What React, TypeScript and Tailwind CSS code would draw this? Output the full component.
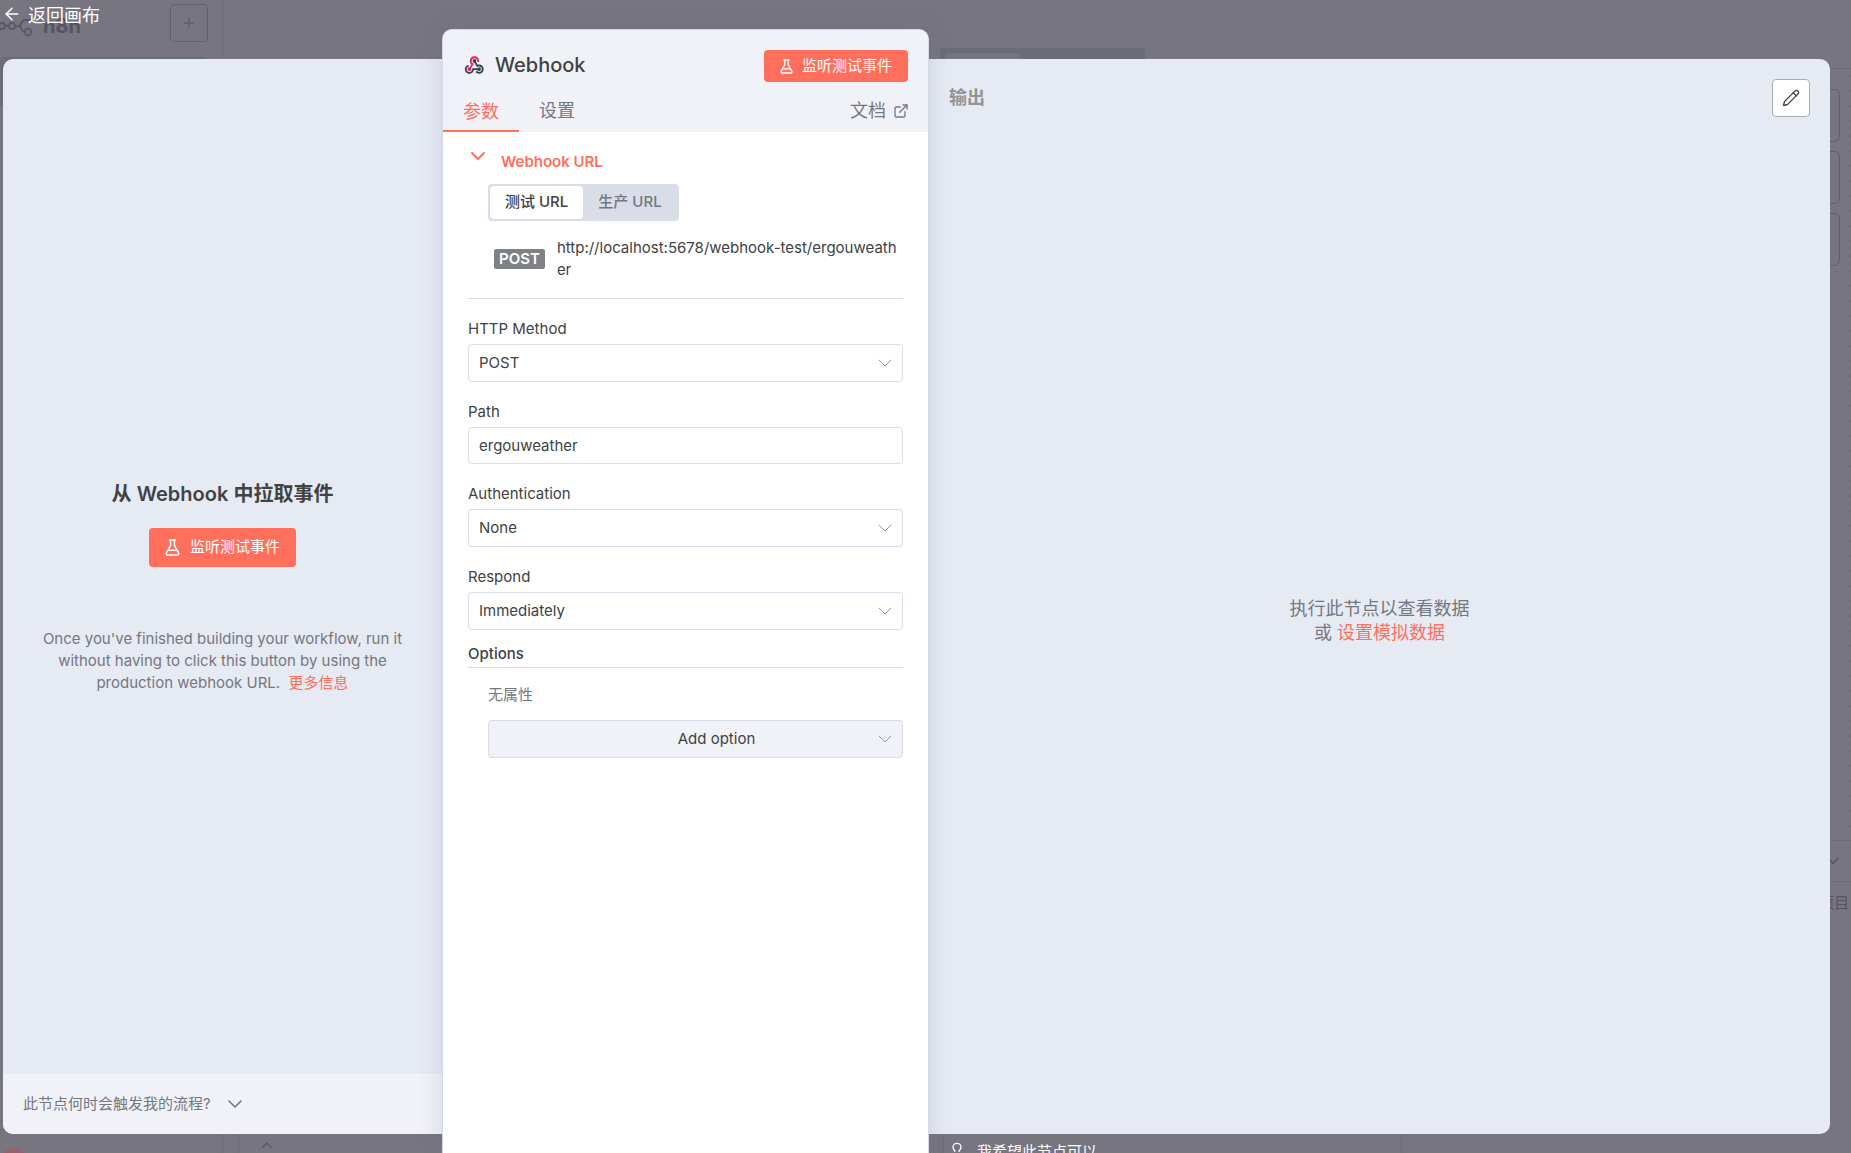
import { useState } from 'react';
import { ArrowLeft, ChevronDown, ChevronUp, ExternalLink, Lightbulb, Pencil, Plus } from 'lucide-react';

function WebhookIcon() {
  return (
    <svg viewBox="0 0 48 48" className="mt-1 size-[22px] shrink-0" aria-hidden="true">
      <path fill="#37474f" d="M35 37c-2.2 0-4-1.8-4-4s1.8-4 4-4 4 1.8 4 4-1.8 4-4 4" />
      <path fill="#37474f" d="M35 43c-3 0-5.9-1.4-7.8-3.7l3.1-2.5c1.1 1.4 2.9 2.3 4.7 2.3 3.3 0 6-2.7 6-6s-2.7-6-6-6c-1 0-2 .3-2.9.7l-1.7 1L23.3 16l3.5-1.9 5.3 9.4c1-.3 2-.5 3-.5 5.5 0 10 4.5 10 10S40.5 43 35 43" />
      <path fill="#37474f" d="M14 43C8.5 43 4 38.5 4 33c0-4.6 3.1-8.5 7.5-9.7l1 3.9C9.9 27.9 8 30.3 8 33c0 3.3 2.7 6 6 6s6-2.7 6-6v-2h15v4H23.8c-.9 4.6-5 8-9.8 8" />
      <path fill="#e91e63" d="M14 37c-2.2 0-4-1.8-4-4s1.8-4 4-4 4 1.8 4 4-1.8 4-4 4" />
      <path fill="#37474f" d="M25 19c-2.2 0-4-1.8-4-4s1.8-4 4-4 4 1.8 4 4-1.8 4-4 4" />
      <path fill="#e91e63" d="m15.7 34-3.4-2 5.9-9.7c-2-1.9-3.2-4.5-3.2-7.3 0-5.5 4.5-10 10-10s10 4.5 10 10c0 .9-.1 1.7-.3 2.5l-3.9-1c.1-.5.2-1 .2-1.5 0-3.3-2.7-6-6-6s-6 2.7-6 6c0 2.1 1.1 4 2.9 5.1l1.7 1z" />
    </svg>
  );
}

function FlaskIcon({ className }: { className: string }) {
  return (
    <svg viewBox="0 0 14 16" fill="none" stroke="currentColor" strokeWidth="1.4" strokeLinecap="round" strokeLinejoin="round" className={className} aria-hidden="true">
      <path d="M4.2 1h5.6M5.2 1v5L1.2 13.2c-.4.9.1 1.8 1 1.8h9.6c.9 0 1.4-.9 1-1.8L8.8 6V1" />
      <path d="M3.2 10.5h7.6" />
    </svg>
  );
}

function LogoIcon() {
  return (
    <svg viewBox="0 0 34 22" fill="none" stroke="#5a5964" strokeWidth="2" className="h-[22px] w-[34px]" aria-hidden="true">
      <circle cx="2" cy="11" r="3" />
      <circle cx="12" cy="11" r="3.2" />
      <path d="M5 11h4M15 11h3c5 0 2-6 7-6h7M18 11c5 0 2 6 7 6" />
      <circle cx="28" cy="17" r="3.2" />
    </svg>
  );
}

type SelectFieldProps = { id: string; label: string; options: string[] };

function SelectField({ id, label, options }: SelectFieldProps) {
  return (
    <div className="mb-5">
      <label htmlFor={id} className="block h-[25px] text-[15px] leading-5">{label}</label>
      <div className="relative">
        <select id={id} className="h-[38px] w-full appearance-none rounded border border-[#d9dce9] bg-white px-[10px] text-[15px]">
          {options.map((option) => (
            <option key={option}>{option}</option>
          ))}
        </select>
        <SelectArrow />
      </div>
    </div>
  );
}

function SelectArrow() {
  return (
    <svg viewBox="0 0 14 8" fill="none" stroke="#94959d" className="pointer-events-none absolute top-[15px] right-[11px] h-2 w-[14px]" aria-hidden="true">
      <path d="M.8.8 7 7 13.2.8" />
    </svg>
  );
}

// Dimmed editor that stays visible around the node dialog
function EditorBackdrop() {
  return (
    <div className="flex h-full text-[#55545f]" aria-hidden="true">
      <aside className="flex w-[223px] shrink-0 flex-col border-r border-[#6b6b7c]">
        <div className="flex h-[57px] items-start pt-1 pr-[14px]">
          <div className="mt-2 flex items-center gap-[9px]">
            <LogoIcon />
            <span className="text-xl leading-7 font-bold">n8n</span>
          </div>
          <span className="ml-auto flex size-[38px] items-center justify-center rounded border border-[#62616f]">
            <Plus className="size-4" strokeWidth={1.5} />
          </span>
        </div>
        <div className="mr-[15px] h-[50px] rounded bg-[#6a6c78]" />
        <div className="mt-auto h-6 border-t border-[#6b6b7c] pt-[18px]">
          <div className="size-[27px] rounded-full bg-[#95626a]" />
        </div>
      </aside>
      <div className="relative flex min-w-0 flex-1 flex-col">
        <div className="h-[69px] shrink-0 border-b border-[#6b6b7c]" />
        <div className="absolute top-12 left-[717px] h-10 w-[205px] rounded bg-[#6a6c78] p-[5px]">
          <div className="h-full w-[75px] rounded bg-[#777580]" />
        </div>
        <div className="flex flex-1 flex-col items-end gap-[9px] bg-[radial-gradient(circle,#706e7b_1px,transparent_1px)] bg-[size:15px_15px] pt-5 pr-[11px]">
          <div className="h-[53px] w-[60px] rounded-md border border-[#605f6d] bg-[#777580]" />
          <div className="h-[53px] w-[60px] rounded-md border border-[#605f6d] bg-[#777580]" />
          <div className="h-[53px] w-[60px] rounded-md border border-[#605f6d] bg-[#777580]" />
        </div>
        <div className="flex h-[313px] flex-col border-t border-[#6b6b7c]">
          <div className="flex h-10 items-center justify-end pr-2">
            <ChevronDown className="size-5" />
          </div>
          <div className="flex flex-1 border-t border-[#6b6b7c] pl-[15px]">
            <div className="flex w-[705px] items-end border-l border-[#6b6b7c] pl-5">
              <ChevronUp className="size-4" />
            </div>
            <div className="w-[458px] border-l border-[#6b6b7c]" />
            <div className="flex-1 border-l border-[#6b6b7c] pt-[10px] pr-[2px] text-right text-[15px] leading-[22px]">
              项目
            </div>
          </div>
        </div>
      </div>
    </div>
  );
}

function InputPanel() {
  return (
    <section className="mt-[59px] mb-[19px] flex w-[439px] shrink-0 flex-col overflow-hidden rounded-l-[10px] bg-[#e6eaf3]">
      <div className="flex flex-1 flex-col items-center justify-center px-8 pt-10 text-center">
        <h2 className="text-xl leading-7 font-semibold">从 Webhook 中拉取事件</h2>
        <button className="mt-5 flex h-[39px] items-center gap-[10px] rounded bg-[#ff6f5c] px-4 text-[15px] text-white">
          <FlaskIcon className="h-[17px] w-[15px]" />
          监听测试事件
        </button>
        <p className="mt-[61px] text-[15px] leading-[22px] text-[#75777f]">
          Once you've finished building your workflow, run it without having to click this button by using the
          production webhook URL. &nbsp;
          <a href="#more" className="text-[#ff6f5c]">更多信息</a>
        </p>
      </div>
      <button className="flex h-[60px] items-center gap-3 bg-[#f1f2f7] px-5 text-[15px] text-[#75777f]">
        此节点何时会触发我的流程?
        <ChevronDown className="size-6" strokeWidth={1.6} />
      </button>
    </section>
  );
}

function NodeSettings() {
  const [urlType, setUrlType] = useState('test');
  const active = 'rounded bg-white text-[#404244]';
  const inactive = 'text-[#75777f]';
  const url = urlType === 'test' ? 'http://localhost:5678/webhook-test/ergouweather' : 'http://localhost:5678/webhook/ergouweather';

  return (
    <section className="z-10 mt-[29px] flex w-[487px] shrink-0 flex-col overflow-hidden rounded-t-[10px] border border-b-0 border-[#d5d9e6] bg-white shadow-[0_0_24px_rgba(80,90,130,0.18)]">
      <header className="bg-[#f1f2f7]">
        <div className="flex items-start gap-[10px] px-5 pt-5">
          <WebhookIcon />
          <h1 className="text-xl leading-[30px] font-medium">Webhook</h1>
          <button className="ml-auto flex h-8 items-center gap-[9px] rounded bg-[#ff6f5c] px-4 text-[15px] text-white">
            <FlaskIcon className="h-[15px] w-[13px]" />
            监听测试事件
          </button>
        </div>
        <nav className="flex pt-2 text-lg leading-6 text-[#75777f]">
          <button className="h-[42px] border-b-2 border-[#ff6f5c] px-5 pt-1 text-[#ff6f5c]">参数</button>
          <button className="h-[42px] border-b-2 border-transparent px-5 pt-[2px]">设置</button>
          <a href="#docs" className="ml-auto flex h-10 items-center gap-[7px] pt-[2px] pr-[19px]">
            文档
            <ExternalLink className="size-4" strokeWidth={2} />
          </a>
        </nav>
      </header>

      <div className="px-[25px] pt-[18px]">
        <button className="-ml-[2px] flex items-start gap-[11px] text-[15px] leading-6 font-semibold text-[#ff6f5c]">
          <ChevronDown className="-mt-[6px] size-6" strokeWidth={2} />
          Webhook URL
        </button>
        <div className="mt-[10px] ml-5 flex h-[37px] w-fit rounded bg-[#d9dde8] p-[2px] text-[15px] font-medium">
          <button className={`px-[15px] ${urlType === 'test' ? active : inactive}`} onClick={() => setUrlType('test')}>
            测试 URL
          </button>
          <button className={`px-[15px] ${urlType === 'prod' ? active : inactive}`} onClick={() => setUrlType('prod')}>
            生产 URL
          </button>
        </div>
        <div className="mt-4 ml-[26px] flex items-center gap-3">
          <span className="rounded-xs bg-[#7e8186] px-[5px] text-[15px] leading-5 font-semibold text-white">POST</span>
          <span className="flex-1 text-[15px] leading-[22px] break-all">{url}</span>
        </div>
        <hr className="mt-[17px] mb-5 border-[#d9dce9]" />

        <SelectField id="method" label="HTTP Method" options={['POST', 'GET', 'PUT', 'DELETE']} />
        <div className="mb-5">
          <label htmlFor="path" className="block h-[25px] text-[15px] leading-5">Path</label>
          <input id="path" defaultValue="ergouweather" className="h-[37px] w-full rounded border border-[#d9dce9] px-[10px] text-[15px]" />
        </div>
        <SelectField id="auth" label="Authentication" options={['None', 'Basic Auth', 'Header Auth']} />
        <SelectField id="respond" label="Respond" options={['Immediately', 'When Last Node Finishes']} />

        <h3 className="-mt-[6px] border-b border-[#d9dce9] pb-[3px] text-[15px] leading-5 font-medium">Options</h3>
        <div className="pl-5">
          <p className="mt-4 text-[15px] leading-[22px] text-[#75777f]">无属性</p>
          <div className="relative mt-[14px]">
            <select aria-label="Add option" className="h-[38px] w-full appearance-none rounded border border-[#d9dce9] bg-[#f1f2f7] pl-[42px] text-center text-[15px]">
              <option>Add option</option>
            </select>
            <SelectArrow />
          </div>
        </div>
      </div>
    </section>
  );
}

function OutputPanel() {
  return (
    <div className="mt-[59px] flex min-w-0 flex-1 flex-col">
      <section className="flex flex-1 flex-col rounded-r-[10px] bg-[#e6eaf3]">
        <div className="flex items-center justify-between px-5 pt-5">
          <h2 className="text-lg font-bold text-[#929498]">输出</h2>
          <button aria-label="编辑输出" className="flex size-[38px] items-center justify-center rounded border border-[#a9adb9] bg-white">
            <Pencil className="size-[18px]" strokeWidth={1.8} />
          </button>
        </div>
        <div className="flex flex-1 flex-col items-center justify-center pb-[10px] text-lg leading-6 text-[#75777f]">
          <p>执行此节点以查看数据</p>
          <p>
            或 <a href="#mock" className="text-[#ff6f5c]">设置模拟数据</a>
          </p>
        </div>
      </section>
      <div className="flex h-[19px] items-start gap-3 overflow-hidden pt-1 pl-5 text-[15px] text-white">
        <Lightbulb className="mt-1 size-4 shrink-0" />
        <span className="mt-[3px] leading-[22px]">我希望此节点可以</span>
      </div>
    </div>
  );
}

export default function App() {
  return (
    <main className="relative h-screen overflow-hidden bg-[#777580] font-['Inter','Noto_Sans_CJK_SC',sans-serif] text-[#404244]">
      <EditorBackdrop />

      {/* Node dialog over the editor */}
      <div className="absolute inset-0 flex pr-[21px] pl-[3px]">
        <InputPanel />
        <NodeSettings />
        <OutputPanel />
      </div>
      <a href="#canvas" className="absolute top-1 left-[2px] flex items-center gap-[6px] text-lg leading-6 text-white">
        <ArrowLeft className="-mt-1 size-5" strokeWidth={1.8} />
        返回画布
      </a>
    </main>
  );
}
